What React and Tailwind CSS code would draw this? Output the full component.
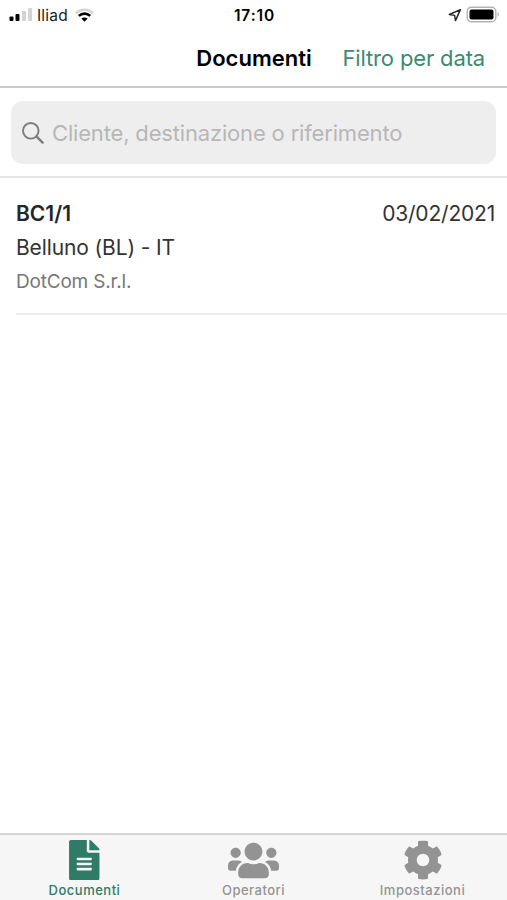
import React from "react";
import { FaFileAlt, FaUsers, FaCog } from "react-icons/fa";

const tabs = [
  { label: "Documenti", Icon: FaFileAlt, size: 40.5, active: true },
  { label: "Operatori", Icon: FaUsers, size: 51 },
  { label: "Impostazioni", Icon: FaCog, size: 40 },
];

const documents = [
  {
    id: "BC1/1",
    date: "03/02/2021",
    place: "Belluno (BL) - IT",
    customer: "DotCom S.r.l.",
  },
];

const StatusBar = () => (
  <div className="grid grid-cols-3 items-center h-[30px] pl-[9px] pr-[7px] text-black">
    <div className="flex items-center">
      <svg width="24" height="14" viewBox="0 0 24 14">
        <rect x="0.5" y="8.5" width="4" height="4.5" rx="1" />
        <rect x="6.5" y="6" width="4" height="7" rx="1" />
        <rect x="13" y="3" width="4" height="10" rx="1" fill="#d4d4d4" />
        <rect x="19" y="0" width="4" height="13" rx="1" fill="#d4d4d4" />
      </svg>
      <span className="ml-1 pt-px text-[15.5px] leading-none tracking-[0.2px] text-[#222]">Iliad</span>
      <svg className="ml-[7px]" width="19" height="14" viewBox="0 0 19 14" fill="none">
        <path d="M1 5.2C5.8.6 13.2.6 18 5.2" stroke="#d4d4d4" strokeWidth="2.6" />
        <path d="M3.8 7.9c3.3-3 8.1-3 11.4 0" stroke="#000" strokeWidth="2.6" />
        <path d="M6.4 10.6c1.9-1.5 4.3-1.5 6.2 0L9.5 13.8z" fill="#000" />
      </svg>
    </div>
    <div className="pt-px text-center text-[15.5px] font-semibold leading-none tracking-[0.9px]">
      17:10
    </div>
    <div className="flex items-center justify-end">
      <svg width="14" height="14" viewBox="0 0 14 14" fill="none">
        <path
          d="M12.4 1.6L1.4 6.5l5.2.9.9 5.2z"
          stroke="#222"
          strokeWidth="1.4"
          strokeLinejoin="round"
        />
      </svg>
      <svg className="ml-1" width="34" height="18" viewBox="0 0 34 18" fill="none">
        <rect x="1.2" y="1.2" width="28.6" height="14.6" rx="4.2" stroke="#b4b4b4" strokeWidth="1.4" />
        <rect x="3.5" y="3.5" width="24" height="10" rx="2" fill="#000" />
        <path d="M31.5 6c1.8.9 1.8 4.1 0 5z" fill="#b4b4b4" />
      </svg>
    </div>
  </div>
);

const Header = () => (
  <header className="grid grid-cols-[1fr_auto_1fr] items-center h-[58px] pr-[22px] border-b-2 border-[#cbcbcb]">
    <span />
    <h1 className="text-[22px] font-semibold text-black pl-[23px]">Documenti</h1>
    <button
      type="button"
      className="justify-self-end text-[22px] tracking-[-0.15px] text-[#3b8a72] whitespace-nowrap"
    >
      Filtro per data
    </button>
  </header>
);

const SearchBar = () => (
  <div className="h-[90px] px-[11px] pt-[13px] border-b-2 border-[#e6e6e6]">
    <div className="flex items-center h-[63px] rounded-xl bg-[#eeeeee] pl-[11px]">
      <svg width="22" height="22" viewBox="0 0 22 22" fill="none" stroke="#7d7d7d" strokeWidth="1.9">
        <circle cx="8.8" cy="8.8" r="7.8" />
        <path d="M14.4 14.4l6.2 6.2" strokeWidth="2.4" strokeLinecap="round" />
      </svg>
      <span className="ml-2 pt-px text-[22px] tracking-[-0.17px] text-[#b7b7b7] whitespace-nowrap">
        Cliente, destinazione o riferimento
      </span>
    </div>
  </div>
);

const DocumentRow = ({ doc }) => (
  <li className="ml-4 pr-3 pt-[19px] h-[137px] border-b-2 border-[#ededed] text-[21px] text-[#333]">
    <div className="flex justify-between leading-[34px]">
      <span className="font-semibold text-[#262626]">{doc.id}</span>
      <span className="tracking-[-0.2px]">{doc.date}</span>
    </div>
    <p className="leading-[34px] tracking-[-0.12px]">{doc.place}</p>
    <p className="text-[19px] leading-[33px] tracking-[-0.2px] text-[#777]">{doc.customer}</p>
  </li>
);

const TabBar = () => (
  <nav className="grid grid-cols-3 h-[67px] bg-[#f6f6f6] border-t-2 border-[#d6d6d6]">
    {tabs.map(({ label, Icon, size, active }) => (
      <button
        key={label}
        type="button"
        className={`flex flex-col items-center pt-1 ${active ? "text-[#2f7b66]" : "text-[#939393]"}`}
      >
        <span className="flex items-center h-[42px]">
          <Icon size={size} />
        </span>
        <span className="mt-px text-[13px] font-medium leading-4 tracking-[0.5px]">{label}</span>
      </button>
    ))}
  </nav>
);

const App = () => (
  <div className="flex flex-col w-full h-screen overflow-hidden bg-white font-['Inter',sans-serif]">
    <StatusBar />
    <Header />
    <SearchBar />
    <ul className="flex-1">
      {documents.map((doc) => (
        <DocumentRow key={doc.id} doc={doc} />
      ))}
    </ul>
    <TabBar />
  </div>
);

export default App;
